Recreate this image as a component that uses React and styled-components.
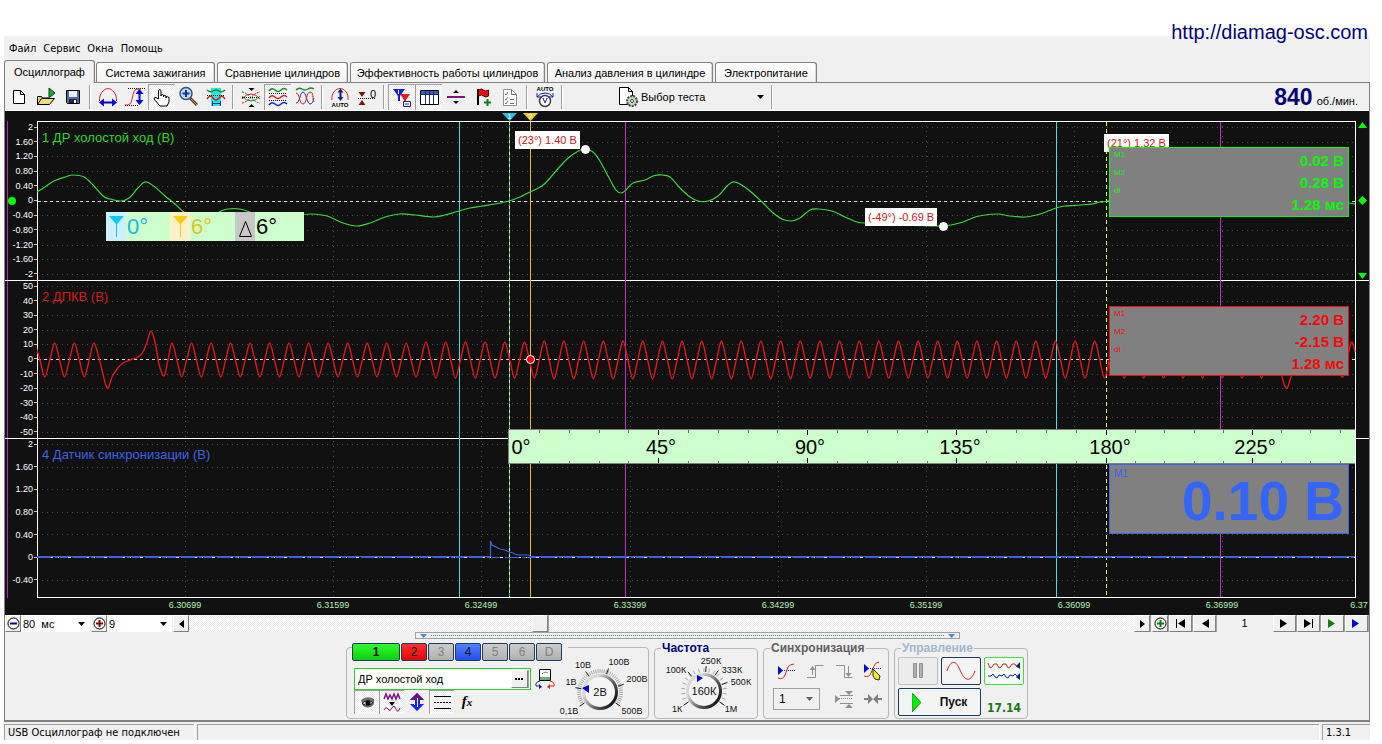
import React from 'react'
import styled, { createGlobalStyle, css } from 'styled-components'

const GlobalStyle = createGlobalStyle`
    body {
        margin: 0;
        background: #ffffff;
        color: #000000;
        font: 11px/14px "Liberation Sans", Arial, sans-serif;
    }
    button, input, select {
        font: inherit;
        color: inherit;
        margin: 0;
        padding: 0;
        border: 0;
        border-radius: 0;
        background: none;
        box-sizing: border-box;
    }
    svg {
        display: block;
        flex: none;
    }
`

/* the plot keeps its marks in window pixels, this is where it starts */
const PLOT = { left: 37, top: 121, width: 1319, height: 477 }
const px = (x) => `${((x - PLOT.left) / PLOT.width) * 100}%`
const py = (y) => `${y - PLOT.top}px`

const checker = 'repeating-conic-gradient(#ffffff 0 25%, #ececec 0 50%) 0 0 / 2px 2px'

/* ---------- window ---------- */

const Page = styled.div`
    position: relative;
    padding: 36px 12px 3px 4px;
`
const SiteLink = styled.a`
    position: absolute;
    top: 20px;
    right: 14px;
    font-size: 20px;
    line-height: 24px;
    color: #00007c;
    text-decoration: none;
`
const Window = styled.div`
    background: #f0f0f0;
`
const MenuBar = styled.nav`
    display: flex;
    gap: 7px;
    height: 24px;
    padding-left: 5px;
    align-items: center;
    font-family: "DejaVu Sans Condensed", "DejaVu Sans", sans-serif;
    font-size: 11px;
    button {
        padding-top: 2px;
    }
`
const Tabs = styled.div`
    display: flex;
    align-items: flex-end;
    gap: 2px;
    height: 22px;
`
const Tab = styled.button`
    && {
        width: ${(p) => p.$width}px;
        height: 20px;
        border: 1px solid #808080;
        border-bottom: 0;
        border-radius: 3px 3px 0 0;
        background: linear-gradient(#ffffff, #f2f2f2);
        white-space: nowrap;
        box-shadow: inset -1px 0 #d8d8d8;
        ${(p) => p.$active && css`
            height: 23px;
            margin: 0 -1px -1px 0;
            background: #f0f0f0;
            position: relative;
        `}
    }
`
const Panel = styled.main`
    border: 1px solid #808080;
    border-bottom-width: 2px;
`

/* ---------- toolbar ---------- */

const Toolbar = styled.div`
    display: flex;
    align-items: center;
    height: 27px;
    border-bottom: 1px solid #ffffff;
`
const ToolButton = styled.button`
    && {
        width: 27px;
        height: 26px;
        display: flex;
        align-items: center;
        justify-content: center;
        ${(p) => p.$pressed && css`
            background: ${checker};
            box-shadow: inset 1px 1px #a0a0a0;
        `}
    }
`
const Separator = styled.span`
    width: 8px;
    height: 24px;
    background: linear-gradient(90deg, transparent 3px, #a0a0a0 3px, #a0a0a0 4px, #ffffff 4px, #ffffff 5px, transparent 5px);
`
const TestPicker = styled.label`
    display: flex;
    align-items: center;
    box-sizing: border-box;
    width: 152px;
    margin-left: 50px;
    padding-right: 4px;
`
const Rpm = styled.div`
    display: flex;
    align-items: baseline;
    gap: 4px;
    margin-left: auto;
    padding-right: 11px;
    strong {
        font-size: 23px;
        line-height: 26px;
        color: #00007c;
    }
`
const Select = styled.select`
    && {
        flex: 1;
        min-width: 0;
        height: 16px;
        padding-left: ${(p) => p.$pad || 1}px;
        appearance: none;
    }
`
const Caret = () => (
    <svg width="7" height="4" viewBox="0 0 7 4"><path d="M0 0h7L3.5 4z" fill="currentColor" /></svg>
)

/* ---------- oscilloscope ---------- */

const Scope = styled.section`
    display: grid;
    grid-template-columns: 32px 1fr 13px;
    grid-template-rows: 10px 477px 17px;
    background: #111111;
    overflow: hidden;
`
const MarkerStrip = styled.div`
    grid-column: 2;
    position: relative;
`
const Marker = styled.span`
    position: absolute;
    left: ${(p) => px(p.$x)};
    top: 2px;
    width: 15px;
    height: 8px;
    margin-left: -7px;
    clip-path: polygon(0 0, 100% 0, 50% 100%);
    background: ${(p) => p.$color};
    color: #ffffff;
    font-size: 8px;
    line-height: 7px;
    text-align: center;
`
const Axis = styled.div`
    grid-column: 1;
    grid-row: 2;
    position: relative;
    border-left: 2px solid #111111;
    box-shadow: inset 1px 0 #c020c0;
`
const Lane = styled.div`
    box-sizing: border-box;
    height: ${(p) => p.$height}px;
    display: flex;
    flex-direction: column;
    justify-content: space-between;
    padding-bottom: ${(p) => p.$bottom || 0}px;
    margin-left: -2px;
    box-shadow: ${(p) => (p.$last ? 'none' : '0 1px #ffffff')};
`
const Level = styled.span`
    display: flex;
    align-items: center;
    justify-content: flex-end;
    gap: 1px;
    height: 12px;
    font-size: 9px;
    color: #ffffff;
    &::after {
        content: '';
        width: 3px;
        height: 1px;
        background: #c0c0c0;
    }
`
const ZeroDot = styled.i`
    position: absolute;
    left: 1px;
    top: 76px;
    width: 8px;
    height: 8px;
    border-radius: 50%;
    background: #00ff00;
`
const Rail = styled.div`
    grid-column: 3;
    grid-row: 2;
`
const RailLane = styled.div`
    box-sizing: border-box;
    height: ${(p) => p.$height}px;
    display: flex;
    flex-direction: column;
    align-items: center;
    justify-content: space-between;
    padding: 1px 0;
    box-shadow: ${(p) => (p.$last ? 'none' : '0 1px #ffffff')};
`
const Plot = styled.div`
    grid-column: 2;
    grid-row: 2;
    position: relative;
    box-shadow: inset 0 0 0 1px #ffffff;
`
const PlotSvg = styled.svg`
    position: absolute;
    inset: 0;
    width: 100%;
    height: 100%;
    path, line {
        fill: none;
        vector-effect: non-scaling-stroke;
    }
    line {
        shape-rendering: crispEdges;
    }
`
const ChannelTitle = styled.h2`
    position: absolute;
    left: 5px;
    top: ${(p) => py(p.$y)};
    margin: 0;
    font-size: 13px;
    font-weight: normal;
    line-height: 16px;
    color: ${(p) => p.$color};
`
const Callout = styled.span`
    position: absolute;
    left: ${(p) => px(p.$x)};
    top: ${(p) => py(p.$y)};
    padding: 0 3px;
    font-size: 11px;
    line-height: 18px;
    white-space: nowrap;
    background: #ffffff;
    color: #c81818;
`
const Dot = styled.i`
    position: absolute;
    box-sizing: border-box;
    left: ${(p) => px(p.$x)};
    top: ${(p) => py(p.$y)};
    width: 9px;
    height: 9px;
    margin: -4px;
    border: 1px solid #ffffff;
    border-radius: 50%;
    background: ${(p) => p.$color};
`
const AngleBox = styled.div`
    position: absolute;
    left: 69px;
    top: ${py(212)};
    display: grid;
    grid-template-columns: 64px 65px 1fr;
    width: 198px;
    height: 29px;
    background: #ccffcc;
    font-size: 22px;
    line-height: 29px;
`
const Angle = styled.span`
    display: flex;
    gap: 1px;
    color: ${(p) => p.$color};
    svg {
        background: ${(p) => p.$back};
    }
`
const Ruler = styled.div`
    position: absolute;
    box-sizing: border-box;
    left: ${px(508)};
    right: 1px;
    top: ${py(429)};
    height: 35px;
    border: 1px solid #808080;
    border-right: 0;
    background: #ccffcc;
    svg {
        width: 100%;
        height: 33px;
    }
    span {
        position: absolute;
        top: 5px;
        transform: translateX(-50%);
        font-size: 20px;
        line-height: 24px;
    }
`
const Readout = styled.dl`
    position: absolute;
    box-sizing: border-box;
    right: 7px;
    top: ${(p) => py(p.$y)};
    width: 240px;
    height: 70px;
    margin: 0;
    padding: 2px 4px;
    display: flex;
    justify-content: space-between;
    border: 1px solid ${(p) => p.$color};
    background: #808080;
    color: ${(p) => p.$color};
    dt {
        font-size: ${(p) => (p.$big ? 10 : 8)}px;
        line-height: ${(p) => (p.$big ? 14 : 9)}px;
        margin-bottom: 9px;
    }
    dd {
        margin: 0;
        font-size: ${(p) => (p.$big ? 55 : 15)}px;
        line-height: ${(p) => (p.$big ? 68 : 22)}px;
        font-weight: bold;
        text-align: right;
    }
`
const TimeAxis = styled.div`
    grid-column: 2;
    grid-row: 3;
    position: relative;
    font-size: 9px;
    line-height: 15px;
    color: #b4f0b4;
    span {
        position: absolute;
        transform: translateX(-50%);
    }
`

/* ---------- time base bar ---------- */

const TimeBar = styled.div`
    display: flex;
    height: 17px;
    align-items: stretch;
    padding-right: 1px;
`
const Combo = styled.div`
    display: flex;
    align-items: center;
    width: ${(p) => p.$width}px;
    margin-right: 1px;
    padding-right: 5px;
    box-sizing: border-box;
    background: #ffffff;
`
const Raised = styled.button`
    && {
        flex: none;
        width: ${(p) => p.$width || 16}px;
        margin-right: ${(p) => p.$gap || 0}px;
        display: flex;
        align-items: center;
        justify-content: center;
        background: #f0f0f0;
        border: 1px solid #ffffff;
        border-right-color: #808080;
        border-bottom-color: #808080;
        box-shadow: 1px 0 #a0a0a0;
        color: ${(p) => p.$color || '#000000'};
    }
`
const Track = styled.div`
    flex: 1;
    display: flex;
    padding-left: 343px;
    background: ${checker};
`
const PageNumber = styled.output`
    width: 57px;
    text-align: center;
    line-height: 17px;
`

/* ---------- dock ---------- */

const Splitter = styled.div`
    display: flex;
    align-items: center;
    justify-content: space-between;
    width: 545px;
    height: 7px;
    box-sizing: border-box;
    margin: 0 auto 3px;
    padding: 0 4px;
    border: 1px solid #a0a0a0;
    color: #3c8ce0;
    span {
        flex: 1;
        margin: 0 4px;
        border-top: 1px dotted #3c8ce0;
    }
`
const Dock = styled.div`
    display: flex;
    justify-content: center;
    align-items: flex-end;
    gap: 5px;
    padding-bottom: 1px;
`
const Group = styled.fieldset`
    box-sizing: border-box;
    width: ${(p) => p.$width}px;
    height: ${(p) => p.$height || 77}px;
    min-width: 0;
    margin: 0;
    padding: 0;
    border: 1px solid #b8b8b8;
    border-radius: 4px;
    legend {
        margin-left: 6px;
        padding: 0 1px;
        font-size: 12px;
        font-weight: bold;
        line-height: 13px;
        color: ${(p) => p.$color};
    }
`
const ChannelRow = styled.div`
    display: flex;
    gap: 1px;
    width: max-content;
    margin: -5px 0 0 5px;
    padding-right: 6px;
    background: #f0f0f0;
`
const ChannelButton = styled.button`
    && {
        width: ${(p) => (p.$wide ? 48 : 26)}px;
        height: 18px;
        border: 1px solid #1c3c5c;
        border-radius: 2px;
        background: ${(p) => p.$back || 'linear-gradient(#cccccc, #b0b0b0)'};
        color: ${(p) => (p.$back ? '#101010' : '#808080')};
        font-size: 12px;
        font-weight: ${(p) => (p.$wide ? 'bold' : 'normal')};
    }
`
const ChannelBody = styled.div`
    display: flex;
    padding-left: 7px;
    > svg {
        margin-top: -4px;
    }
`
const ChannelSetup = styled.div`
    width: 204px;
`
const NameRow = styled.div`
    display: flex;
    align-items: center;
    gap: 1px;
    height: 22px;
    margin-top: 7px;
`
const NameBox = styled.div`
    display: flex;
    box-sizing: border-box;
    width: 177px;
    height: 22px;
    padding: 1px 2px;
    border: 1px solid #30d030;
    background: #ffffff;
    input {
        flex: 1;
        min-width: 0;
        padding-left: 1px;
        outline: 0;
    }
`
const Row = styled.div`
    display: flex;
    align-items: center;
    gap: ${(p) => p.$gap || 0}px;
`
const SmallTool = styled.button`
    && {
        width: 25px;
        height: 24px;
        display: flex;
        align-items: center;
        justify-content: center;
        ${(p) => p.$pressed && css`
            background: ${checker};
            box-shadow: inset 1px 1px #a0a0a0;
        `}
    }
`
const SyncGrid = styled.div`
    display: grid;
    grid-template-columns: repeat(4, 24px);
    column-gap: 5px;
    row-gap: 4px;
    padding: 5px 0 0 9px;
`
const SyncSelect = styled.div`
    grid-column: span 2;
    display: flex;
    align-items: center;
    box-sizing: border-box;
    width: 47px;
    height: 22px;
    padding: 0 6px 0 4px;
    border: 1px solid #a0a0a0;
    font-size: 12px;
    color: #606060;
    select {
        color: #000000;
    }
`
const ControlGrid = styled.div`
    display: grid;
    grid-template-columns: repeat(3, 40px);
    gap: 3px;
    padding: 2px 0 0 3px;
`
const ControlButton = styled.button`
    && {
        display: flex;
        align-items: center;
        justify-content: center;
        height: 28px;
        grid-column: ${(p) => (p.$wide ? 'span 2' : 'auto')};
        gap: 19px;
        border: 1px solid ${(p) => p.$border};
        border-radius: 2px;
        background: ${(p) => p.$back || '#f4f4f4'};
        font-size: 12px;
        font-weight: bold;
        color: #101010;
    }
`
const Voltage = styled.output`
    align-self: end;
    justify-self: center;
    font: bold 12px/16px "DejaVu Sans Condensed", "DejaVu Sans", sans-serif;
    color: #107c10;
`

/* ---------- status bar ---------- */

const StatusBar = styled.footer`
    display: flex;
    gap: 3px;
    padding-top: 2px;
    font-family: "DejaVu Sans Condensed", "DejaVu Sans", sans-serif;
    font-size: 11px;
`
const StatusCell = styled.div`
    box-sizing: border-box;
    width: ${(p) => p.$width || 'auto'};
    flex: ${(p) => (p.$width ? 'none' : 1)};
    height: 16px;
    padding-left: 3px;
    line-height: 15px;
    border-top: 1px solid #a0a0a0;
    border-left: 1px solid #a0a0a0;
    box-shadow: 1px 0 #ffffff;
    white-space: nowrap;
`

/* ---------- icons ---------- */

const Icon = ({ size = 24, children }) => (
    <svg width={size} height={size} viewBox="0 0 24 24" fill="none" stroke="#000000" strokeWidth="1" aria-hidden="true">
        {children}
    </svg>
)

const icons = {
    file: <Icon><path d="M6.5 5.5h7l4 4v9h-11zM13.5 5.5v4h4" fill="#fff" /></Icon>,
    open: <Icon>
        <path d="M3.5 19.500v-8h4l1 1.500h6v2" fill="#e8d070" />
        <path d="M3.500 19.500l4-6h13l-5 6z" fill="#f0dc80" />
        <path d="M15 3l6 5-6 5z" fill="#10b030" stroke="#104010" />
    </Icon>,
    save: <Icon>
        <path d="M5.500 5.500h13v13h-12l-1-1z" fill="#5068a8" />
        <path d="M8 6h8v6H8z" fill="#e8f0f8" stroke="none" />
        <path d="M8 14h8v4H8z" fill="#202840" stroke="none" />
        <path d="M13 15h2v3h-2z" fill="#fff" stroke="none" />
    </Icon>,
    stretchX: <Icon>
        <path d="M3.500 16C3 9 8 3.500 12 3.500S21 9 20.500 16" stroke="#e02020" />
        <path d="M5 17.500h14" stroke="#0000d8" strokeWidth="2" />
        <path d="M3 17.500l5-4v8zM21 17.500l-5-4v8z" fill="#0000d8" stroke="none" />
    </Icon>,
    stretchY: <Icon>
        <path d="M5 3.500h17M2 20.500h14" strokeDasharray="1 1" />
        <path d="M2 20h3c6-1 3-15 9-16h4" stroke="#e02020" />
        <path d="M16.500 6v12" stroke="#0000d8" strokeWidth="2" />
        <path d="M16.500 4l4 5h-8zM16.500 20l4-5h-8z" fill="#0000d8" stroke="none" />
    </Icon>,
    hand: <Icon>
        <path d="M8.500 14V5.500q1.500-2 2.500 0V11v-1q1.500-1 2.500 0v2-1q1.500-1 2.500 0v2-1q1.500-1 3 .5v4.500l-2 4h-7l-6-7q0-2 2-1.500z" fill="#fff" />
    </Icon>,
    magnify: <Icon>
        <path d="M13 13l7 7" stroke="#604020" strokeWidth="3" />
        <path d="M14 14l6 6" stroke="#c09050" />
        <circle cx="9" cy="8.500" r="6" fill="#b8e0f8" stroke="#305080" strokeWidth="1.500" />
        <path d="M9 5v7M5.500 8.500h7" stroke="#1030a0" strokeWidth="2" />
    </Icon>,
    measure: <Icon>
        <path d="M7 3h10v18H7z" fill="#20e8e8" stroke="none" />
        <path d="M3 5q3 3 6 1t6 0 6-1" stroke="#109020" strokeWidth="1.500" />
        <path d="M3 14q3-5 6-1t6 0 6 1" stroke="#d02020" strokeWidth="1.500" />
        <path d="M3 10.500h18" strokeDasharray="1 1" />
        <path d="M8.500 16v5M16.500 16v5M9 18.500h8" stroke="#103090" />
    </Icon>,
    cross: <Icon>
        <path d="M3 7c6 0 12 11 18 11" stroke="#109020" strokeDasharray="2 1" />
        <path d="M3 18C9 18 15 7 21 7" stroke="#d02020" strokeDasharray="2 1" />
        <path d="M3 11q4 5 9 5t9-5" stroke="#109020" />
        <path d="M3 14q4-5 9-5t9 5" stroke="#d02020" />
        <path d="M3 12.500h18" strokeDasharray="1 1" />
        <path d="M9.500 3h6l-3 3zM9.500 22h6l-3-3z" fill="#000" stroke="none" />
    </Icon>,
    spread: <Icon>
        <path d="M3 6q3-4 6-1t6 0 6 0" stroke="#109020" strokeWidth="1.500" />
        <path d="M3 13q3-4 6-1t6 0 6 0" stroke="#d02020" strokeWidth="1.500" />
        <path d="M3 20q3-4 6-1t6 0 6 0" stroke="#1020d0" strokeWidth="1.500" />
        <path d="M3 8.500h18M3 15.500h18" strokeDasharray="1 1" />
    </Icon>,
    overlay: <Icon>
        <path d="M3 5q3-3 6-1t6 0 6 0" stroke="#109020" strokeWidth="1.500" />
        <path d="M3 18C7 18 7 7 10 7s4 12 7 12 3-4 4-6" stroke="#2030d0" />
        <path d="M3 8c4 0 3 11 7 11s3-12 7-12 2 6 4 10" stroke="#d02020" />
    </Icon>,
    autoFit: <Icon>
        <path d="M4 15C3 8 8 3.500 12 3.500S21 8 20 15" stroke="#e02020" />
        <path d="M12.500 6v8" stroke="#102080" strokeWidth="2" />
        <path d="M12.500 3.500l3 4h-6zM12.500 16l3-4h-6z" fill="#102080" stroke="none" />
        <text x="12" y="22" fontSize="6" fontWeight="bold" textAnchor="middle" fill="#000" stroke="none">AUTO</text>
    </Icon>,
    zero: <Icon>
        <path d="M3 13.500h18" strokeDasharray="1 1" />
        <path d="M3.500 7h7l-3.500 5zM3.500 20h7L7 15z" fill="#801010" stroke="none" />
        <text x="18" y="13" fontSize="11" textAnchor="middle" fill="#000" stroke="none">0</text>
    </Icon>,
    markers: <Icon>
        <path d="M3 4h12l-5 7v5H8v-5z" fill="#1020e0" stroke="none" />
        <path d="M10 9h10l-4 6v4h-2v-4z" fill="#e02020" stroke="none" />
        <path d="M8.500 5v4" stroke="#fff" />
        <path d="M13.500 16.500h7v5h-7zM15 19h4" stroke="#102090" fill="#fff" />
    </Icon>,
    table: <Icon>
        <path d="M3.500 5.500h18v14h-18z" fill="#fff" />
        <path d="M4 6h17v3H4z" fill="#3060c0" stroke="none" />
        <path d="M3.500 9.500h18M8.500 6v13M12.500 6v13M16.500 6v13" stroke="#203050" />
    </Icon>,
    splitLine: <Icon>
        <path d="M3 12h18" stroke="#80107c" strokeWidth="2" />
        <path d="M9 8h6l-3-3zM9 16h6l-3 3z" fill="#000" stroke="none" />
    </Icon>,
    flag: <Icon>
        <path d="M7 4v16" strokeWidth="2" />
        <path d="M7.500 5q3-2 5 0t5 0v6q-3 2-5 0t-5 0z" fill="#e81010" stroke="#600000" />
        <path d="M16.500 14v7M13 17.500h7" stroke="#108010" strokeWidth="2" />
    </Icon>,
    checklist: <Icon>
        <path d="M5.500 4.500h8l5 5v11h-13z" fill="#fff" stroke="#909090" />
        <path d="M13.500 4.500v5h5M7 9l1 1 2-3M7 14l1 1 2-3M7 18l1 1 2-3M12 14.500h4M12 18.500h4" stroke="#707070" />
    </Icon>,
    autoClock: <Icon>
        <text x="12" y="6" fontSize="6" fontWeight="bold" textAnchor="middle" fill="#000" stroke="none">AUTO</text>
        <path d="M4 12q3-4 8-4t8 4M4 8v4h4M20 8v4h-4" stroke="#1020c0" />
        <circle cx="12" cy="16" r="5.500" fill="#fff" stroke="#404040" strokeWidth="1.500" />
        <path d="M10 13l2 5 2-5" stroke="#1020c0" />
    </Icon>,
    testPage: <Icon>
        <path d="M3.500 2.500h9l4 4v13h-13z" fill="#fff" />
        <path d="M12.500 2.500v4h4" />
        <circle cx="16" cy="16" r="5" fill="#c8d0c8" stroke="#405040" strokeWidth="2" strokeDasharray="2 1" />
        <circle cx="16" cy="16" r="1.500" fill="#fff" stroke="#405040" />
    </Icon>,
    swap: <Icon>
        <path d="M7.500 2.500h11v11h-11z" fill="#fff" />
        <path d="M8 10h10v3H8z" fill="#60b070" stroke="none" />
        <path d="M10 7q3-3 6-1" strokeDasharray="1 1" />
        <path d="M8 14q-5 1-4 5h4" stroke="#102080" /><path d="M7 17l3 3-3 2z" fill="#102080" stroke="none" />
        <path d="M18 14q5 1 4 5h-4" stroke="#e02020" /><path d="M18 17l-3 3 3 2z" fill="#e02020" stroke="none" />
    </Icon>,
    eye: <Icon>
        <path d="M6 10q6-5 13-1v5q-4 6-11 2z" fill="#707070" stroke="none" />
        <path d="M7 13.500q5-5 11-1-4 5-11 1z" fill="#d8d8d8" stroke="#202020" />
        <circle cx="13" cy="13" r="2.500" fill="#000" stroke="none" />
    </Icon>,
    smoothing: <Icon>
        <path d="M4 9l2-5 2 5 2-4 2 4 2-5 2 5 2-5 2 5" stroke="#801080" strokeWidth="1.500" />
        <path d="M9 12h6l-3 4z" fill="#000" stroke="none" />
        <path d="M4 20q2-4 4-1t4-1 4 1 4-1" stroke="#801080" />
    </Icon>,
    invert: <Icon>
        <path d="M12 3l7 7h-4v4h4l-7 7-7-7h4v-4H5z" fill="#1020f0" stroke="none" />
        <path d="M12 3l7 7H5z" fill="#701080" stroke="none" />
        <path d="M12.500 8v9M9.500 10v5" stroke="#fff" />
    </Icon>,
    levels: <Icon><path d="M4 6.500h17M4 18.500h17" /><path d="M4 12.500h17" strokeDasharray="2 1" /></Icon>,
    fx: <Icon>
        <text x="12" y="16" fontSize="15" fontWeight="bold" fontStyle="italic" fontFamily="Liberation Serif, serif" textAnchor="middle" fill="#000" stroke="none">
            f<tspan fontSize="11">x</tspan>
        </text>
    </Icon>,
    trigger: <Icon>
        <path d="M4 10.500h17" stroke="#1020c0" strokeDasharray="1 1" />
        <path d="M4 6l5 4.500L4 15z" fill="#0000e0" stroke="none" />
        <path d="M4 18q5 2 7-3l3-8q2-3 6-3" stroke="#d02020" />
    </Icon>,
    rise: <Icon><path d="M4 17.500h8.500v-12h8M9.500 15V8" stroke="#909090" /><path d="M6.500 10l3-4 3 4z" fill="#909090" stroke="none" /></Icon>,
    fall: <Icon><path d="M4 5.500h8.500v12h8M16.500 6v8" stroke="#909090" /><path d="M13.500 13l3 4 3-4z" fill="#909090" stroke="none" /></Icon>,
    triggerPick: <Icon>
        <path d="M3 8.500h17" stroke="#1020c0" strokeDasharray="1 1" />
        <path d="M3 4l5 4.500L3 13z" fill="#0000e0" stroke="none" />
        <path d="M3 16q5 2 7-3l3-7q2-4 5-4" stroke="#d02020" />
        <path d="M12 9l7 7-1 4-4-1-2-3z" fill="#f8e820" stroke="#303000" />
    </Icon>,
    gate: <Icon>
        <path d="M7 10.500h13" stroke="#909090" strokeDasharray="1 1" />
        <path d="M3 7l5 4-5 4zM13 3h8l-4 4zM13 20h8l-4-4z" fill="#909090" stroke="none" />
        <path d="M8 7.500h13M8 15.500h13" stroke="#909090" />
    </Icon>,
    squeeze: <Icon><path d="M3 11h6M21 11h-6" stroke="#808080" strokeWidth="2" /><path d="M7 6l5 5-5 5zM17 6l-5 5 5 5z" fill="#808080" stroke="none" /></Icon>,
    pause: <Icon><path d="M7.500 4.500h3v14h-3zM13.500 4.500h3v14h-3z" fill="#b0b0b0" stroke="#909090" /></Icon>,
    play: <svg width="9" height="19" viewBox="0 0 9 19"><path d="M0 0l9 9.500L0 19z" fill="#00f000" stroke="#209020" /></svg>,
    sine: <svg width="30" height="20" viewBox="0 0 30 20" fill="none"><path d="M1 10C5-2 10-1 14 9s10 14 15 1" stroke="#d02020" /></svg>,
    multi: <svg width="34" height="22" viewBox="0 0 34 22" fill="none">
        <path d="M1 3l2 5 2-1 2-3 3 0 2 4 2-1 2-3 3 0 2 4 2-1 2-3 3 0 2 3 1 0" stroke="#d02020" />
        <path d="M1 16h3l2-2 2 3 2 1 2-3 3 1 2-2 2 3 2 1 2-3 3 1 2-2 3 3" stroke="#1020a0" />
        <path d="M33 2v7l-4-3zM33 13v7l-4-3z" fill="#102080" />
    </svg>,
}

const toolbar = [
    ['Новый', 'file'], ['Открыть', 'open'], ['Сохранить', 'save'], null,
    ['Растянуть по времени', 'stretchX'], ['Растянуть по уровню', 'stretchY'], ['Сдвиг', 'hand', true],
    ['Лупа', 'magnify'], ['Измерение', 'measure'], null,
    ['Свести', 'cross'], ['Разнести', 'spread', true], ['Наложить', 'overlay'], null,
    ['Автомасштаб', 'autoFit'], ['Ноль', 'zero'], null,
    ['Маркеры', 'markers', true], ['Таблица', 'table', true], ['Линия', 'splitLine'], ['Флаг', 'flag'], ['Отчёт', 'checklist'], null,
    ['Автонастройка', 'autoClock'], null,
]

const tabs = [
    ['Осциллограф', 91], ['Система зажигания', 119], ['Сравнение цилиндров', 131],
    ['Эффективность работы цилиндров', 195], ['Анализ давления в цилиндре', 166], ['Электропитание', 102],
]

/* ---------- traces ---------- */

/* Catmull-Rom spline through the samples */
const smooth = (pts) => pts.slice(1).reduce((d, p, i) => {
    const p0 = pts[i - 1] || pts[i]
    const p1 = pts[i]
    const p3 = pts[i + 2] || p
    const c1 = [p1[0] + (p[0] - p0[0]) / 6, p1[1] + (p[1] - p0[1]) / 6]
    const c2 = [p[0] - (p3[0] - p1[0]) / 6, p[1] - (p3[1] - p1[1]) / 6]
    return `${d}C${c1} ${c2} ${p}`
}, `M${pts[0]}`)

const idleTrace = [
    [37, 192], [45, 187], [54, 181], [65, 177], [73, 175], [84, 177], [93, 185], [103, 196], [110, 199], [121, 201],
    [129, 198], [137, 189], [143, 183], [147, 182], [155, 187], [165, 196], [175, 204], [185, 213], [200, 221], [212, 217],
    [221, 211], [228, 209], [240, 209], [250, 212], [266, 219], [280, 221], [296, 216], [310, 214], [322, 215], [330, 217],
    [343, 223], [357, 226], [370, 223], [385, 217], [400, 214], [415, 215], [433, 217], [445, 215], [459, 211], [470, 208],
    [482, 206], [495, 204], [509, 201], [520, 197], [530, 192], [542, 186], [550, 178], [556, 171], [566, 160], [575, 153],
    [585, 149], [593, 152], [600, 161], [608, 176], [616, 190], [621, 193], [626, 190], [633, 183], [645, 180], [653, 176],
    [662, 175], [670, 177], [680, 188], [690, 197], [698, 201], [708, 201], [718, 196], [727, 186], [733, 182], [740, 184],
    [750, 191], [762, 202], [772, 212], [782, 219], [791, 221], [800, 218], [810, 210], [818, 209], [832, 211], [845, 217],
    [857, 222], [865, 223], [900, 225], [935, 226], [943, 226], [951, 225], [963, 222], [975, 217], [985, 215], [998, 214],
    [1010, 216], [1025, 217], [1040, 214], [1056, 208], [1065, 206], [1080, 205], [1092, 204], [1100, 202], [1108, 201],
    [1150, 190], [1200, 160], [1260, 180], [1320, 201], [1349, 203], [1355, 204],
]

/* full teeth of the crank wheel: a crest and a trough for each */
const teeth = (from, count, step, high, low) => Array.from({ length: count }, (_, i) => {
    const x = from + i * step
    const mid = (high + low) / 2
    return [[x, high], [x + step / 4, mid], [x + step / 2, low], [x + step * 3 / 4, mid]]
}).flat()

const crankTrace = [
    ...teeth(35, 3, 19.7, 343, 377), [94, 343], [100, 362], [107, 388], [112, 377], [117, 369], [123, 363], [130, 360], [138, 357],
    [143, 352], [147, 342], [151, 331], [155, 342], [159, 364], [164, 376], [168, 360],
    ...teeth(172, 13, 19.52, 343, 377),
    ...teeth(426, 6, 19.7, 342, 378),
    ...teeth(544.2, 13, 19.7, 341, 379),
    ...teeth(800.3, 24, 19.63, 341, 378),
    [1271, 341], [1278, 362], [1286, 388], [1292, 375], [1302, 363], [1317, 357], [1330, 331], [1342, 377], [1351, 343], [1355, 352],
]

const syncTrace = 'M37 556.500H490.500V541L492 545L496 547L500 549L505 550L509 552L513 553L517 555H529L530 556.500H1355'

const steps = (from, step, count) => Array.from({ length: count }, (_, i) => Math.round(from + step * i) + 0.5)
const gridRows = [...steps(127, 14.7, 11), ...steps(286, 14.6, 11), ...steps(444, 22.6, 7)]
const times = [
    [185, '6.30699'], [333, '6.31599'], [481, '6.32499'], [630, '6.33399'], [778, '6.34299'],
    [926, '6.35199'], [1074, '6.36099'], [1222, '6.36999'], [1359, '6.37'],
]
const cursors = [
    [459, '#38e0e8'], [509, '#18b0b0'], [509, '#f0f060', '3 3'], [530, '#e8b828'], [625, '#cc28cc'],
    [1056, '#38e0e8'], [1106, '#f0f040', '4 3'], [1220, '#cc28cc'],
]
const lanes = [
    { height: 159, levels: ['2', '1.60', '1.20', '0.80', '0.40', '0', '-0.40', '-0.80', '-1.20', '-1.60', '-2'] },
    { height: 158, levels: ['50', '40', '30', '20', '10', '0', '-10', '-20', '-30', '-40', '-50'] },
    { height: 160, bottom: 12, levels: ['2', '1.60', '1.20', '0.80', '0.40', '0', '-0.40'] },
]
const degrees = [[521, '0°'], [661, '45°'], [810, '90°'], [960, '135°'], [1110, '180°'], [1255, '225°']]
const rulerTicks = [
    539, 569, 599, 628, 658, 688, 718, 748, 777, 807, 837, 867, 897, 927, 956, 986, 1016, 1046, 1076, 1106,
    1135, 1164, 1194, 1223, 1252, 1281, 1310, 1340,
]

const Traces = () => (
    <PlotSvg viewBox={`${PLOT.left} ${PLOT.top} ${PLOT.width} ${PLOT.height}`} preserveAspectRatio="none">
        {gridRows.map((y) => <line key={y} x1="42" x2="1355" y1={y} y2={y} stroke="#484848" strokeDasharray="1 4" />)}
        {times.slice(0, 8).map(([x]) => (
            <line key={x} x1={x + 0.5} x2={x + 0.5} y1="126" y2="597" stroke="#484848" strokeDasharray="1 4" />
        ))}
        {[280.5, 438.5].map((y) => <line key={y} x1="37" x2="1356" y1={y} y2={y} stroke="#ffffff" />)}
        {[201.5, 359.5, 557.5].map((y) => (
            <line key={y} x1="38" x2="1355" y1={y} y2={y} stroke="#d8d8d8" strokeDasharray="3 3" />
        ))}
        {cursors.map(([x, color, dash]) => (
            <line key={x + color} x1={x + 0.5} x2={x + 0.5} y1="122" y2="597" stroke={color} strokeDasharray={dash} />
        ))}
        <path d={smooth(idleTrace)} stroke="#38d838" strokeWidth="1.200" />
        <path d={smooth(crankTrace)} stroke="#e01818" strokeWidth="1.400" />
        <path d={syncTrace} stroke="#3c64e0" strokeWidth="1.200" />
        <path d="M37 557.500H1355" stroke="#3c64e0" strokeDasharray="14 4 3 2 8 5" />
    </PlotSvg>
)

/* ---------- knob ---------- */

const KnobText = styled.text`
    font-size: ${(p) => p.$size || 9}px;
    text-anchor: middle;
    dominant-baseline: central;
    fill: #101010;
`

const Knob = ({ id, width, height, cx, cy, value, marks, needle }) => {
    const spoke = (deg, r1, r2) => {
        const a = (deg * Math.PI) / 180
        return `M${cx + r1 * Math.cos(a)} ${cy + r1 * Math.sin(a)}L${cx + r2 * Math.cos(a)} ${cy + r2 * Math.sin(a)}`
    }
    const fine = Array.from({ length: id === 'range' ? 45 : 19 }, (_, i) => 145 + (i * 250) / (id === 'range' ? 44 : 18))
    return (
        <svg width={width} height={height} viewBox={`0 0 ${width} ${height}`} fill="none" role="img" aria-label={value}>
            <defs>
                <linearGradient id={id} x1="0" y1="0.2" x2="1" y2="0.9">
                    <stop offset="0.2" stopColor="#d8d8d8" />
                    <stop offset="0.6" stopColor="#606060" />
                    <stop offset="1" stopColor="#000000" />
                </linearGradient>
            </defs>
            <path d={fine.map((d) => spoke(d, 19, 23)).join('')} stroke="#a8a8a8" />
            <path d={marks.map((m) => spoke(m[3], 19, 25)).join('')} stroke="#202020" />
            <circle cx={cx} cy={cy} r="16.500" fill="#f4f4f4" stroke={`url(#${id})`} strokeWidth="3" />
            <path d={needle} fill="#0000e0" />
            <KnobText x={cx} y={cy} $size={11}>{value}</KnobText>
            {marks.map(([x, y, text]) => <KnobText key={text} x={x} y={y}>{text}</KnobText>)}
        </svg>
    )
}

const Arrow = ({ dir = 1, bar }) => (
    <svg width="11" height="9" viewBox="0 0 11 9" fill="currentColor">
        <path d={dir > 0 ? 'M1 0l7 4.500L1 9z' : 'M10 0L3 4.500 10 9z'} />
        {bar && <path d={dir > 0 ? 'M9 0h1v9H9z' : 'M1 0h1v9H1z'} />}
    </svg>
)
const Thin = ({ dir }) => (
    <svg width="5" height="8" viewBox="0 0 5 8"><path d={dir > 0 ? 'M0 0l5 4-5 4z' : 'M5 0L0 4l5 4z'} /></svg>
)
const Round = ({ color, plus }) => (
    <svg width="13" height="13" viewBox="0 0 13 13" fill="#ffffff">
        <circle cx="6.500" cy="6.500" r="5.500" stroke="#000000" />
        <path d={plus ? 'M3 6.500h7M6.500 3v7' : 'M3 6.500h7'} stroke={color} strokeWidth="2" />
    </svg>
)

/* ---------- page parts ---------- */

const ScopeView = () => (
    <Scope aria-label="Осциллограмма">
        <MarkerStrip>
            <Marker $x={509} $color="#20c0f0">1</Marker>
            <Marker $x={530} $color="#f8c820">2</Marker>
        </MarkerStrip>
        <Axis>
            {lanes.map((lane, i) => (
                <Lane key={i} $height={lane.height} $bottom={lane.bottom} $last={i === 2}>
                    {lane.levels.map((level) => <Level key={level}>{level}</Level>)}
                </Lane>
            ))}
            <ZeroDot />
        </Axis>
        <Plot>
            <Traces />
            <ChannelTitle $y={130} $color="#28d828">1 ДР холостой ход (В)</ChannelTitle>
            <ChannelTitle $y={289} $color="#d81818">2 ДПКВ (В)</ChannelTitle>
            <ChannelTitle $y={447} $color="#3c64e0">4 Датчик синхронизации (В)</ChannelTitle>
            <AngleBox>
                <Angle $color="#20b8e0" $back="#ccf0ff">
                    <svg width="20" height="29" viewBox="0 0 20 29"><path d="M3 4h15l-7 8v13h-1V12z" fill="#08c8ff" /></svg>0°
                </Angle>
                <Angle $color="#e8c020" $back="#fff0cc">
                    <svg width="20" height="29" viewBox="0 0 20 29"><path d="M3 4h15l-7 8v13h-1V12z" fill="#ffc800" /></svg>6°
                </Angle>
                <Angle $color="#000000" $back="#c8c8c8">
                    <svg width="20" height="29" viewBox="0 0 20 29"><path d="M10.500 9.500l6 15h-12z" fill="none" stroke="#000000" /></svg>6°
                </Angle>
            </AngleBox>
            <Callout $x={515} $y={131}>(23°) 1.40 В</Callout>
            <Callout $x={865} $y={208}>(-49°) -0.69 В</Callout>
            <Callout $x={1104} $y={134}>(21°) 1.32 В</Callout>
            <Dot $x={585} $y={149} $color="#ffffff" />
            <Dot $x={943} $y={226} $color="#ffffff" />
            <Dot $x={530} $y={359} $color="#f00000" />
            <Ruler>
                <svg viewBox="509 0 846 33" preserveAspectRatio="none" shapeRendering="crispEdges">
                    {rulerTicks.map((x, i) => (
                        <path
                            key={x}
                            d={i % 5 === 4 ? `M${x + 0.5} 0v5M${x + 0.5} 28v5` : `M${x + 0.5} 0v3M${x + 0.5} 31v2`}
                            stroke={i % 5 === 4 ? '#000000' : '#707070'}
                        />
                    ))}
                </svg>
                {degrees.map(([x, text]) => (
                    <span key={text} style={{ left: `${((x - 509) / 846) * 100}%` }}>{text}</span>
                ))}
            </Ruler>
            <Readout $y={147} $color="#08f808">
                <div><dt>M1</dt><dt>M2</dt><dt>dt</dt></div>
                <div><dd>0.02 В</dd><dd>0.28 В</dd><dd>1.28 мс</dd></div>
            </Readout>
            <Readout $y={306} $color="#f80808">
                <div><dt>M1</dt><dt>M2</dt><dt>dt</dt></div>
                <div><dd>2.20 В</dd><dd>-2.15 В</dd><dd>1.28 мс</dd></div>
            </Readout>
            <Readout $y={464} $color="#3464f8" $big>
                <dt>M1</dt>
                <dd>0.10 В</dd>
            </Readout>
        </Plot>
        <Rail>
            <RailLane $height={159}>
                <svg width="9" height="6" viewBox="0 0 9 6"><path d="M4.500 0L9 6H0z" fill="#00ff00" /></svg>
                <svg width="9" height="9" viewBox="0 0 9 9"><path d="M4.500 0L9 4.500 4.500 9 0 4.500z" fill="#00ff00" /></svg>
                <svg width="9" height="6" viewBox="0 0 9 6"><path d="M0 0h9L4.500 6z" fill="#00ff00" /></svg>
            </RailLane>
            <RailLane $height={158} />
            <RailLane $height={160} $last />
        </Rail>
        <TimeAxis>
            {times.map(([x, text]) => <span key={text} style={{ left: px(x) }}>{text}</span>)}
        </TimeAxis>
    </Scope>
)

const TimeControls = () => (
    <TimeBar>
        <Raised aria-label="Уменьшить развёртку"><Round color="#000080" /></Raised>
        <Combo $width={69}>
            <Select aria-label="Развёртка" $pad={2}><option>80 &nbsp;мс</option></Select>
            <Caret />
        </Combo>
        <Raised aria-label="Увеличить развёртку"><Round color="#800000" plus /></Raised>
        <Combo $width={65}>
            <Select aria-label="Кадр" $pad={2}><option>9</option></Select>
            <Caret />
        </Combo>
        <Raised aria-label="Влево"><Thin dir={-1} /></Raised>
        <Track><Raised aria-label="Положение" /></Track>
        <Raised aria-label="Вправо" $gap={2}><Thin dir={1} /></Raised>
        <Raised aria-label="Добавить" $gap={1}><Round color="#008000" plus /></Raised>
        <Raised aria-label="В начало" $width={23} $gap={1}><Arrow dir={-1} bar /></Raised>
        <Raised aria-label="Назад" $width={23}><Arrow dir={-1} /></Raised>
        <PageNumber>1</PageNumber>
        <Raised aria-label="Вперёд" $width={23} $gap={1}><Arrow /></Raised>
        <Raised aria-label="В конец" $width={23} $gap={1}><Arrow bar /></Raised>
        <Raised aria-label="Воспроизвести" $width={23} $gap={1} $color="#108010"><Arrow /></Raised>
        <Raised aria-label="Воспроизвести всё" $width={23} $color="#0000e0"><Arrow /></Raised>
    </TimeBar>
)

const ChannelGroup = () => (
    <Group $width={303} $height={72}>
        <ChannelRow>
            <ChannelButton $wide $back="linear-gradient(#30f830, #10d010)">1</ChannelButton>
            <ChannelButton $back="linear-gradient(#ff3030, #e00808)">2</ChannelButton>
            <ChannelButton>3</ChannelButton>
            <ChannelButton $back="linear-gradient(#5080ff, #2050f0)">4</ChannelButton>
            <ChannelButton>5</ChannelButton>
            <ChannelButton>6</ChannelButton>
            <ChannelButton>D</ChannelButton>
        </ChannelRow>
        <ChannelBody>
            <ChannelSetup>
                <NameRow>
                    <NameBox>
                        <input aria-label="Датчик" defaultValue="ДР холостой ход" />
                        <Raised aria-label="Выбрать датчик" $width={17}>
                            <svg width="9" height="2" viewBox="0 0 9 2"><path d="M0 0h2v2H0zM3 0h2v2H3zM6 0h2v2H6z" /></svg>
                        </Raised>
                    </NameBox>
                    {icons.swap}
                </NameRow>
                <Row>
                    <SmallTool aria-label="Показать" $pressed>{icons.eye}</SmallTool>
                    <SmallTool aria-label="Сглаживание" $pressed>{icons.smoothing}</SmallTool>
                    <SmallTool aria-label="Инверсия">{icons.invert}</SmallTool>
                    <SmallTool aria-label="Уровни" $pressed>{icons.levels}</SmallTool>
                    <SmallTool aria-label="Функция">{icons.fx}</SmallTool>
                </Row>
            </ChannelSetup>
            <Knob
                id="range" width={90} height={60} cx={42} cy={35} value="2В" needle="M24 31l7-3v8z"
                marks={[
                    [11, 54, '0,1В', 145], [13, 25, '1В', 190], [25, 8, '10В', 235],
                    [61, 5, '100В', 290], [79, 22, '200В', 342], [74, 54, '500В', 35],
                ]}
            />
        </ChannelBody>
    </Group>
)

const App = () => (
    <>
        <GlobalStyle />
        <Page>
            <SiteLink href="http://diamag-osc.com">http://diamag-osc.com</SiteLink>
            <Window>
                <MenuBar>
                    {['Файл', 'Сервис', 'Окна', 'Помощь'].map((item) => <button key={item}>{item}</button>)}
                </MenuBar>
                <Tabs role="tablist">
                    {tabs.map(([title, width], i) => (
                        <Tab key={title} role="tab" aria-selected={i === 0} $width={width} $active={i === 0}>{title}</Tab>
                    ))}
                </Tabs>
                <Panel>
                    <Toolbar>
                        {toolbar.map((tool, i) => (tool
                            ? <ToolButton key={tool[0]} aria-label={tool[0]} $pressed={tool[2]}>{icons[tool[1]]}</ToolButton>
                            : <Separator key={i} />
                        ))}
                        <TestPicker>
                            {icons.testPage}
                            <Select aria-label="Выбор теста"><option>Выбор теста</option></Select>
                            <Caret />
                        </TestPicker>
                        <Separator />
                        <Rpm><strong>840</strong>об./мин.</Rpm>
                    </Toolbar>
                    <ScopeView />
                    <TimeControls />
                    <Splitter>
                        <Caret /><span /><Caret />
                    </Splitter>
                    <Dock>
                        <ChannelGroup />
                        <Group $width={104} $color="#00007c">
                            <legend>Частота</legend>
                            <Knob
                                id="rate" width={102} height={61} cx={49} cy={36} value="160К" needle="M42 20l6 3-6 4z"
                                marks={[
                                    [22, 54, '1К', 145], [21, 15, '100К', 230], [56, 6, '250К', 275],
                                    [77, 15, '333К', 305], [86, 27, '500К', 340], [76, 54, '1М', 35],
                                ]}
                            />
                        </Group>
                        <Group $width={126} $color="#606060">
                            <legend>Синхронизация</legend>
                            <SyncGrid>
                                <SmallTool aria-label="Уровень">{icons.trigger}</SmallTool>
                                <SmallTool aria-label="По фронту" disabled>{icons.rise}</SmallTool>
                                <SmallTool aria-label="По спаду" disabled>{icons.fall}</SmallTool>
                                <SmallTool aria-label="Выбрать уровень">{icons.triggerPick}</SmallTool>
                                <SyncSelect>
                                    <Select aria-label="Канал синхронизации"><option>1</option></Select>
                                    <Caret />
                                </SyncSelect>
                                <SmallTool aria-label="Окно" disabled>{icons.gate}</SmallTool>
                                <SmallTool aria-label="Сжать" disabled>{icons.squeeze}</SmallTool>
                            </SyncGrid>
                        </Group>
                        <Group $width={134} $color="#a0b8d0">
                            <legend>Управление</legend>
                            <ControlGrid>
                                <ControlButton aria-label="Пауза" $border="#c0c0c0" $back="#ececec" disabled>{icons.pause}</ControlButton>
                                <ControlButton aria-label="Один кадр" $border="#1c3c5c">{icons.sine}</ControlButton>
                                <ControlButton aria-label="Непрерывно" $border="#40e040" $back="#f4fff4">{icons.multi}</ControlButton>
                                <ControlButton $wide $border="#1c3c5c">{icons.play}Пуск</ControlButton>
                                <Voltage>17.14</Voltage>
                            </ControlGrid>
                        </Group>
                    </Dock>
                </Panel>
                <StatusBar>
                    <StatusCell $width="190px">USB Осциллограф не подключен</StatusCell>
                    <StatusCell />
                    <StatusCell $width="48px">1.3.1</StatusCell>
                </StatusBar>
            </Window>
        </Page>
    </>
)

export default App
